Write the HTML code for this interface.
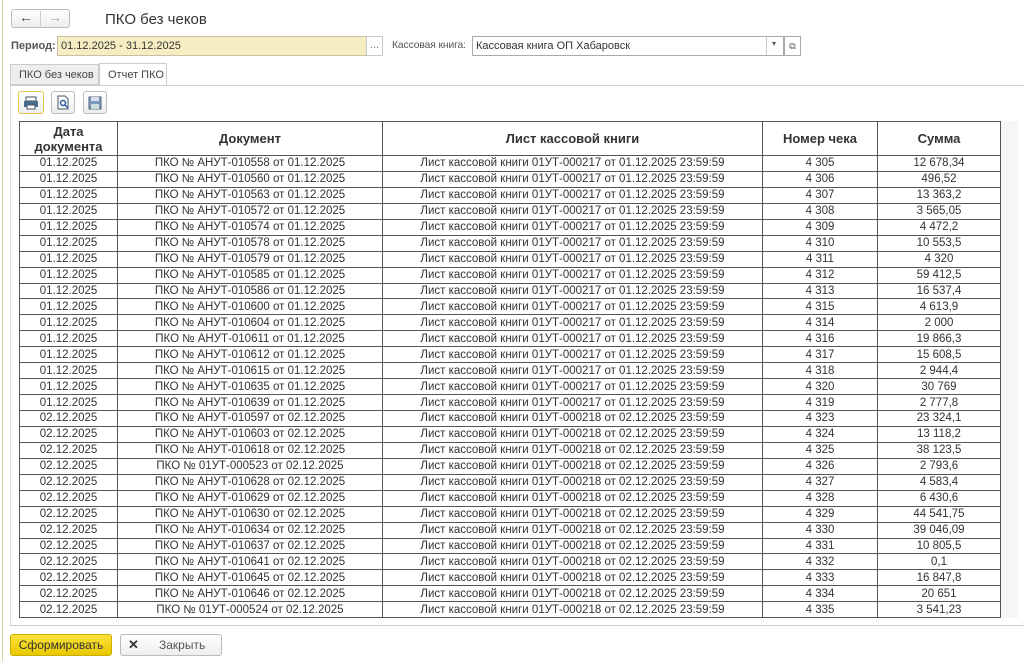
<!DOCTYPE html>
<html><head><meta charset="utf-8"><style>
*{box-sizing:border-box;margin:0;padding:0}
body{width:1024px;height:661px;background:#fff;font-family:"Liberation Sans",sans-serif;font-size:11px;color:#333;position:relative;overflow:hidden}
.a{position:absolute}
table{border-collapse:collapse;table-layout:fixed;position:absolute;left:19px;top:121px;width:981px}
td,th{border:1px solid #555;text-align:center;white-space:nowrap;overflow:hidden;font-size:11.5px;color:#333;padding:0}
th{font-size:13px;font-weight:bold;height:34px;line-height:15px}
td{height:15.95px;line-height:14px}
.btn{border:1px solid #bbb;border-radius:3px;background:linear-gradient(#fff,#eee)}
</style></head><body>
<div class="a" style="left:2px;top:0;width:1px;height:661px;background:#d9cfa0"></div>
<div class="a btn" style="left:11px;top:9px;width:59px;height:19px"></div>
<div class="a" style="left:40px;top:11px;width:1px;height:15px;background:#ccc"></div>
<div class="a" style="left:19px;top:9px;font-size:14px;color:#444">&#8592;</div>
<div class="a" style="left:48px;top:9px;font-size:14px;color:#aaa">&#8594;</div>
<div class="a" style="left:105px;top:11px;font-size:15px;color:#333">ПКО без чеков</div>
<div class="a" style="left:11px;top:40px;font-weight:bold;color:#555">Период:</div>
<div class="a" style="left:57px;top:36px;width:310px;height:20px;background:#f6eec2;border:1px solid #c8c0a0;padding:3px 3px;color:#333">01.12.2025 - 31.12.2025</div>
<div class="a" style="left:366px;top:36px;width:17px;height:20px;border:1px solid #c8c8c8;text-align:center;color:#777;line-height:16px">...</div>
<div class="a" style="left:392px;top:40px;color:#555;font-size:10.3px;letter-spacing:-0.1px">Кассовая книга:</div>
<div class="a" style="left:472px;top:36px;width:312px;height:20px;border:1px solid #aaa;padding:3px 3px">Кассовая книга ОП Хабаровск</div>
<div class="a" style="left:766px;top:37px;width:1px;height:18px;background:#ccc"></div>
<div class="a" style="left:772px;top:39px;font-size:8px;color:#555">&#9662;</div>
<div class="a" style="left:784px;top:36px;width:17px;height:20px;border:1px solid #aaa;font-size:9px;text-align:center;line-height:18px;color:#555">&#10697;</div>
<div class="a" style="left:10px;top:64px;width:89px;height:21px;background:#eee;border:1px solid #ccc;padding:4px 0 0 8px;color:#444">ПКО без чеков</div>
<div class="a" style="left:99px;top:63px;width:68px;height:23px;background:#fff;border:1px solid #ccc;border-bottom:none;padding:5px 0 0 8px;color:#444">Отчет ПКО</div>
<div class="a" style="left:10px;top:85px;width:1014px;height:541px;border-top:1px solid #ccc;border-left:1px solid #ddd;border-bottom:1px solid #ccc"></div>
<div class="a btn" style="left:18px;top:91px;width:26px;height:23px;border-color:#e6c34a"></div>
<svg class="a" style="left:23px;top:96px" width="16" height="14"><rect x="3" y="1" width="10" height="4" fill="#fff" stroke="#456"/><rect x="1" y="5" width="14" height="6" fill="#4a6a90"/><rect x="4" y="9" width="8" height="4" fill="#fff" stroke="#456"/></svg>
<div class="a btn" style="left:51px;top:91px;width:24px;height:23px"></div>
<svg class="a" style="left:56px;top:95px" width="14" height="15"><path d="M2 1h7l3 3v10H2z" fill="#fff" stroke="#456"/><circle cx="7" cy="8" r="2.5" fill="none" stroke="#2a5aa0" stroke-width="1.5"/><path d="M9 10l3 3" stroke="#2a5aa0" stroke-width="1.5"/></svg>
<div class="a btn" style="left:83px;top:91px;width:24px;height:23px"></div>
<svg class="a" style="left:88px;top:96px" width="14" height="14"><rect x="1" y="1" width="12" height="12" fill="#7a9ac0" stroke="#567"/><rect x="3" y="1" width="8" height="4" fill="#dde"/><rect x="3" y="8" width="8" height="5" fill="#cdd"/></svg>
<div class="a" style="left:1000px;top:121px;width:18px;height:497px;background:#f6f6f6"></div>
<table>
<colgroup><col style="width:98px"><col style="width:265px"><col style="width:380px"><col style="width:115px"><col style="width:123px"></colgroup>
<tr><th>Дата<br>документа</th><th>Документ</th><th>Лист кассовой книги</th><th>Номер чека</th><th>Сумма</th></tr>
<tr><td>01.12.2025</td><td>ПКО № АНУТ-010558 от 01.12.2025</td><td>Лист кассовой книги 01УТ-000217 от 01.12.2025 23:59:59</td><td>4 305</td><td>12 678,34</td></tr>
<tr><td>01.12.2025</td><td>ПКО № АНУТ-010560 от 01.12.2025</td><td>Лист кассовой книги 01УТ-000217 от 01.12.2025 23:59:59</td><td>4 306</td><td>496,52</td></tr>
<tr><td>01.12.2025</td><td>ПКО № АНУТ-010563 от 01.12.2025</td><td>Лист кассовой книги 01УТ-000217 от 01.12.2025 23:59:59</td><td>4 307</td><td>13 363,2</td></tr>
<tr><td>01.12.2025</td><td>ПКО № АНУТ-010572 от 01.12.2025</td><td>Лист кассовой книги 01УТ-000217 от 01.12.2025 23:59:59</td><td>4 308</td><td>3 565,05</td></tr>
<tr><td>01.12.2025</td><td>ПКО № АНУТ-010574 от 01.12.2025</td><td>Лист кассовой книги 01УТ-000217 от 01.12.2025 23:59:59</td><td>4 309</td><td>4 472,2</td></tr>
<tr><td>01.12.2025</td><td>ПКО № АНУТ-010578 от 01.12.2025</td><td>Лист кассовой книги 01УТ-000217 от 01.12.2025 23:59:59</td><td>4 310</td><td>10 553,5</td></tr>
<tr><td>01.12.2025</td><td>ПКО № АНУТ-010579 от 01.12.2025</td><td>Лист кассовой книги 01УТ-000217 от 01.12.2025 23:59:59</td><td>4 311</td><td>4 320</td></tr>
<tr><td>01.12.2025</td><td>ПКО № АНУТ-010585 от 01.12.2025</td><td>Лист кассовой книги 01УТ-000217 от 01.12.2025 23:59:59</td><td>4 312</td><td>59 412,5</td></tr>
<tr><td>01.12.2025</td><td>ПКО № АНУТ-010586 от 01.12.2025</td><td>Лист кассовой книги 01УТ-000217 от 01.12.2025 23:59:59</td><td>4 313</td><td>16 537,4</td></tr>
<tr><td>01.12.2025</td><td>ПКО № АНУТ-010600 от 01.12.2025</td><td>Лист кассовой книги 01УТ-000217 от 01.12.2025 23:59:59</td><td>4 315</td><td>4 613,9</td></tr>
<tr><td>01.12.2025</td><td>ПКО № АНУТ-010604 от 01.12.2025</td><td>Лист кассовой книги 01УТ-000217 от 01.12.2025 23:59:59</td><td>4 314</td><td>2 000</td></tr>
<tr><td>01.12.2025</td><td>ПКО № АНУТ-010611 от 01.12.2025</td><td>Лист кассовой книги 01УТ-000217 от 01.12.2025 23:59:59</td><td>4 316</td><td>19 866,3</td></tr>
<tr><td>01.12.2025</td><td>ПКО № АНУТ-010612 от 01.12.2025</td><td>Лист кассовой книги 01УТ-000217 от 01.12.2025 23:59:59</td><td>4 317</td><td>15 608,5</td></tr>
<tr><td>01.12.2025</td><td>ПКО № АНУТ-010615 от 01.12.2025</td><td>Лист кассовой книги 01УТ-000217 от 01.12.2025 23:59:59</td><td>4 318</td><td>2 944,4</td></tr>
<tr><td>01.12.2025</td><td>ПКО № АНУТ-010635 от 01.12.2025</td><td>Лист кассовой книги 01УТ-000217 от 01.12.2025 23:59:59</td><td>4 320</td><td>30 769</td></tr>
<tr><td>01.12.2025</td><td>ПКО № АНУТ-010639 от 01.12.2025</td><td>Лист кассовой книги 01УТ-000217 от 01.12.2025 23:59:59</td><td>4 319</td><td>2 777,8</td></tr>
<tr><td>02.12.2025</td><td>ПКО № АНУТ-010597 от 02.12.2025</td><td>Лист кассовой книги 01УТ-000218 от 02.12.2025 23:59:59</td><td>4 323</td><td>23 324,1</td></tr>
<tr><td>02.12.2025</td><td>ПКО № АНУТ-010603 от 02.12.2025</td><td>Лист кассовой книги 01УТ-000218 от 02.12.2025 23:59:59</td><td>4 324</td><td>13 118,2</td></tr>
<tr><td>02.12.2025</td><td>ПКО № АНУТ-010618 от 02.12.2025</td><td>Лист кассовой книги 01УТ-000218 от 02.12.2025 23:59:59</td><td>4 325</td><td>38 123,5</td></tr>
<tr><td>02.12.2025</td><td>ПКО № 01УТ-000523 от 02.12.2025</td><td>Лист кассовой книги 01УТ-000218 от 02.12.2025 23:59:59</td><td>4 326</td><td>2 793,6</td></tr>
<tr><td>02.12.2025</td><td>ПКО № АНУТ-010628 от 02.12.2025</td><td>Лист кассовой книги 01УТ-000218 от 02.12.2025 23:59:59</td><td>4 327</td><td>4 583,4</td></tr>
<tr><td>02.12.2025</td><td>ПКО № АНУТ-010629 от 02.12.2025</td><td>Лист кассовой книги 01УТ-000218 от 02.12.2025 23:59:59</td><td>4 328</td><td>6 430,6</td></tr>
<tr><td>02.12.2025</td><td>ПКО № АНУТ-010630 от 02.12.2025</td><td>Лист кассовой книги 01УТ-000218 от 02.12.2025 23:59:59</td><td>4 329</td><td>44 541,75</td></tr>
<tr><td>02.12.2025</td><td>ПКО № АНУТ-010634 от 02.12.2025</td><td>Лист кассовой книги 01УТ-000218 от 02.12.2025 23:59:59</td><td>4 330</td><td>39 046,09</td></tr>
<tr><td>02.12.2025</td><td>ПКО № АНУТ-010637 от 02.12.2025</td><td>Лист кассовой книги 01УТ-000218 от 02.12.2025 23:59:59</td><td>4 331</td><td>10 805,5</td></tr>
<tr><td>02.12.2025</td><td>ПКО № АНУТ-010641 от 02.12.2025</td><td>Лист кассовой книги 01УТ-000218 от 02.12.2025 23:59:59</td><td>4 332</td><td>0,1</td></tr>
<tr><td>02.12.2025</td><td>ПКО № АНУТ-010645 от 02.12.2025</td><td>Лист кассовой книги 01УТ-000218 от 02.12.2025 23:59:59</td><td>4 333</td><td>16 847,8</td></tr>
<tr><td>02.12.2025</td><td>ПКО № АНУТ-010646 от 02.12.2025</td><td>Лист кассовой книги 01УТ-000218 от 02.12.2025 23:59:59</td><td>4 334</td><td>20 651</td></tr>
<tr><td>02.12.2025</td><td>ПКО № 01УТ-000524 от 02.12.2025</td><td>Лист кассовой книги 01УТ-000218 от 02.12.2025 23:59:59</td><td>4 335</td><td>3 541,23</td></tr>
</table>
<div class="a" style="left:10px;top:634px;width:102px;height:22px;background:linear-gradient(#fbe23a,#e8c800);border:1px solid #c9ad00;border-radius:3px;text-align:center;line-height:20px;font-size:12px;color:#333">Сформировать</div>
<div class="a btn" style="left:120px;top:634px;width:102px;height:22px;font-size:12px;color:#555;line-height:20px"><span style="position:absolute;left:7px;font-weight:bold;color:#333;font-size:13px">✕</span><span style="position:absolute;left:38px">Закрыть</span></div>
</body></html>
